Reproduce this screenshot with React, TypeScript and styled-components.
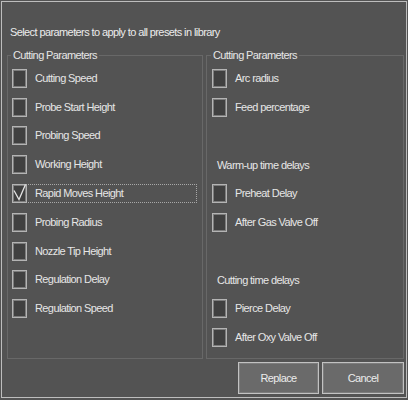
import React from "react";
import styled, { createGlobalStyle } from "styled-components";

type Row =
  | { kind: "check"; label: string; checked?: boolean; focused?: boolean }
  | { kind: "title"; label: string }
  | { kind: "gap" };

const leftRows: Row[] = [
  { kind: "check", label: "Cutting Speed" },
  { kind: "check", label: "Probe Start Height" },
  { kind: "check", label: "Probing Speed" },
  { kind: "check", label: "Working Height" },
  { kind: "check", label: "Rapid Moves Height", checked: true, focused: true },
  { kind: "check", label: "Probing Radius" },
  { kind: "check", label: "Nozzle Tip Height" },
  { kind: "check", label: "Regulation Delay" },
  { kind: "check", label: "Regulation Speed" },
];

const rightRows: Row[] = [
  { kind: "check", label: "Arc radius" },
  { kind: "check", label: "Feed percentage" },
  { kind: "gap" },
  { kind: "title", label: "Warm-up time delays" },
  { kind: "check", label: "Preheat Delay" },
  { kind: "check", label: "After Gas Valve Off" },
  { kind: "gap" },
  { kind: "title", label: "Cutting time delays" },
  { kind: "check", label: "Pierce Delay" },
  { kind: "check", label: "After Oxy Valve Off" },
];

const App: React.FC = () => {
  const renderRows = (rows: Row[]) =>
    rows.map((row, i) => {
      if (row.kind === "gap") return <RowLine key={i} />;
      if (row.kind === "title")
        return (
          <RowLine key={i}>
            <SubTitle>{row.label}</SubTitle>
          </RowLine>
        );
      return (
        <RowLine key={i}>
          <Box>
            {row.checked && (
              <Tick viewBox="0 0 15 19">
                <polyline points="2,6.5 7,15.5 13.5,0.5" />
              </Tick>
            )}
          </Box>
          <Label $focused={row.focused}>{row.label}</Label>
        </RowLine>
      );
    });

  return (
    <>
      <GlobalStyle />
      <Window>
        <Heading>Select parameters to apply to all presets in library</Heading>
        <Columns>
          <GroupBox $inset={4}>
            <Legend>Cutting Parameters</Legend>
            {renderRows(leftRows)}
          </GroupBox>
          <GroupBox $inset={5}>
            <Legend>Cutting Parameters</Legend>
            {renderRows(rightRows)}
          </GroupBox>
        </Columns>
        <Buttons>
          <Button $width={81}>Replace</Button>
          <Button $width={82}>Cancel</Button>
        </Buttons>
      </Window>
    </>
  );
};

const GlobalStyle = createGlobalStyle`
  body {
    margin: 0;
    background: #535353;
    font-family: "Liberation Sans", Arial, sans-serif;
    font-size: 11px;
    letter-spacing: -0.6px;
    color: #e6e6e6;
  }
`;

const Window = styled.div`
  box-sizing: border-box;
  margin: 1px 0 0 1px;
  width: 406px;
  height: 397px;
  border: 1px solid #bdbdbd;
  background: #535353;
  padding: 23px 2px 3px 5px;
  display: flex;
  flex-direction: column;
`;

const Heading = styled.div`
  height: 14px;
  line-height: 14px;
  padding-left: 3px;
  color: #ececec;
  white-space: nowrap;
`;

const Columns = styled.div`
  display: grid;
  grid-template-columns: 196px 198px;
  column-gap: 3px;
  margin-top: 9px;
  height: 311px;
`;

const GroupBox = styled.fieldset<{ $inset: number }>`
  box-sizing: border-box;
  margin: 0;
  min-width: 0;
  height: 311px;
  border: 1px solid #686868;
  padding: 2px 0 0 ${(p) => p.$inset}px;
  display: flex;
  flex-direction: column;
`;

const Legend = styled.legend`
  margin-left: -1px;
  padding: 0 2px;
  height: 14px;
  line-height: 14px;
  color: #e6e6e6;
`;

const RowLine = styled.div`
  height: 28.8px;
  display: flex;
  align-items: center;
`;

const Box = styled.div`
  position: relative;
  box-sizing: border-box;
  flex: 0 0 15px;
  height: 19px;
  background: #404040;
  border: 1px solid #b4b4b4;
  box-shadow: inset 0 0 0 1px #7c7c7c;
`;

const Tick = styled.svg`
  position: absolute;
  left: -1px;
  top: -1px;
  width: 15px;
  height: 19px;
  overflow: visible;

  polyline {
    fill: none;
    stroke: #e4e4e4;
    stroke-width: 1.3;
  }
`;

const Label = styled.div<{ $focused?: boolean }>`
  box-sizing: border-box;
  flex: 1;
  height: 19px;
  line-height: 17px;
  margin: 0 5px 0 -1px;
  padding-left: 8px;
  border: 1px dotted ${(p) => (p.$focused ? "#a8a8a8" : "transparent")};
  white-space: nowrap;
`;

const SubTitle = styled.div`
  padding-left: 5px;
  white-space: nowrap;
`;

const Buttons = styled.div`
  display: flex;
  justify-content: flex-end;
  gap: 3px;
  margin-top: 3px;
`;

const Button = styled.button<{ $width: number }>`
  box-sizing: border-box;
  width: ${(p) => p.$width}px;
  height: 32px;
  background: #6a6a6a;
  border: 1px solid #c2c2c2;
  box-shadow: inset 0 0 0 1px #7d7d7d;
  color: #ececec;
  font-family: inherit;
  font-size: 11px;
  letter-spacing: inherit;
  padding: 0;
`;

export default App;
